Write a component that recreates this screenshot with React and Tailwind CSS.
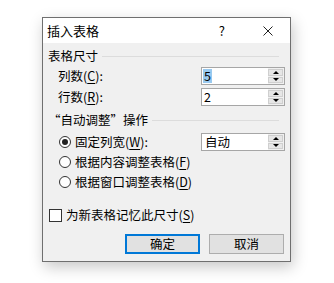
import React from 'react';

const font = { fontFamily: '"Microsoft YaHei", "Noto Sans CJK SC", "Noto Sans", sans-serif' };

function Spinner() {
  return (
    <div className="flex h-full w-[16px] flex-col gap-[1px] bg-[#f0f0f0] py-[1px] pr-[1px]">
      <div className="flex flex-1 items-center justify-center border border-[#cfcfcf] bg-[#e6e6e6]">
        <div className="h-0 w-0 border-x-[3px] border-b-[3px] border-x-transparent border-b-black" />
      </div>
      <div className="flex flex-1 items-center justify-center border border-[#cfcfcf] bg-[#e6e6e6]">
        <div className="h-0 w-0 border-x-[3px] border-t-[3px] border-x-transparent border-t-black" />
      </div>
    </div>
  );
}

function NumberBox({ value, selected }) {
  return (
    <div className="flex h-[18px] w-[84px] items-stretch border border-[#a6a6a6] bg-white">
      <div className="flex flex-1 items-center pl-[1px]">
        <span className={`px-[1px] leading-[14px] ${selected ? 'bg-[#99c9ef]' : ''}`}>{value}</span>
      </div>
      <Spinner />
    </div>
  );
}

function GroupHeader({ children }) {
  return (
    <div className="flex h-[18px] items-center gap-[4px]">
      <span className="whitespace-nowrap leading-none">{children}</span>
      <div className="mr-[6px] h-px flex-1 bg-[#dcdcdc]" />
    </div>
  );
}

function Key({ children }) {
  return <span className="underline underline-offset-[2px]">{children}</span>;
}

function Radio({ checked, children, extra }) {
  return (
    <div className="flex h-[18px] items-center pl-[11px]">
      <div className="flex h-[12px] w-[12px] items-center justify-center rounded-full border border-[#333] bg-white">
        {checked && <div className="h-[6px] w-[6px] rounded-full bg-[#222]" />}
      </div>
      <span className="ml-[4px] leading-none">{children}</span>
      {extra}
    </div>
  );
}

export default function App() {
  return (
    <div className="h-[283px] w-[334px] bg-white pl-[42px] pt-[17px] text-[12.5px] text-black" style={font}>
      <div className="w-[249px] border border-[#6f6f6f] bg-[#f0f0f0] shadow-[2px_5px_14px_rgba(0,0,0,0.22)]">
        {/* title bar */}
        <div className="flex h-[25px] items-center bg-white pl-[4px]">
          <span className="text-[13px] leading-none">插入表格</span>
          <span className="ml-auto mr-[38px] text-[13px] leading-none">?</span>
          <svg className="mr-[17px]" width="10" height="10" viewBox="0 0 10 10">
            <path d="M0.5 0.5L9.5 9.5M9.5 0.5L0.5 9.5" stroke="#222" strokeWidth="1" />
          </svg>
        </div>

        {/* body */}
        <div className="flex flex-col px-[5px] pb-[7px] pt-[4px]">
          <GroupHeader>表格尺寸</GroupHeader>

          <div className="mt-[2px] flex h-[18px] items-center justify-between pl-[10px]">
            <span className="leading-none">列数(<Key>C</Key>):</span>
            <NumberBox value="5" selected />
          </div>
          <div className="mt-[3px] flex h-[18px] items-center justify-between pl-[10px]">
            <span className="leading-none">行数(<Key>R</Key>):</span>
            <NumberBox value="2" />
          </div>

          <div className="mt-[5px]">
            <GroupHeader>“自动调整”操作</GroupHeader>
          </div>

          <div className="mt-[4px]">
            <Radio checked extra={<div className="ml-auto"><NumberBox value={<span className="pl-[1px]">自动</span>} /></div>}>
              固定列宽(<Key>W</Key>):
            </Radio>
          </div>
          <div className="mt-[2px]">
            <Radio>根据内容调整表格(<Key>F</Key>)</Radio>
          </div>
          <div className="mt-[2px]">
            <Radio>根据窗口调整表格(<Key>D</Key>)</Radio>
          </div>

          <div className="mt-[15px] flex h-[18px] items-center pl-[1px]">
            <div className="h-[13px] w-[13px] border border-[#333] bg-white" />
            <span className="ml-[4px] leading-none">为新表格记忆此尺寸(<Key>S</Key>)</span>
          </div>

          <div className="mt-[10px] flex justify-end gap-[9px] pr-[1px]">
            <button className="flex h-[20px] w-[75px] items-center justify-center border-2 border-[#0078d7] bg-[#e1e1e1] leading-none">
              确定
            </button>
            <button className="flex h-[20px] w-[75px] items-center justify-center border border-[#adadad] bg-[#e1e1e1] leading-none">
              取消
            </button>
          </div>
        </div>
      </div>
    </div>
  );
}
